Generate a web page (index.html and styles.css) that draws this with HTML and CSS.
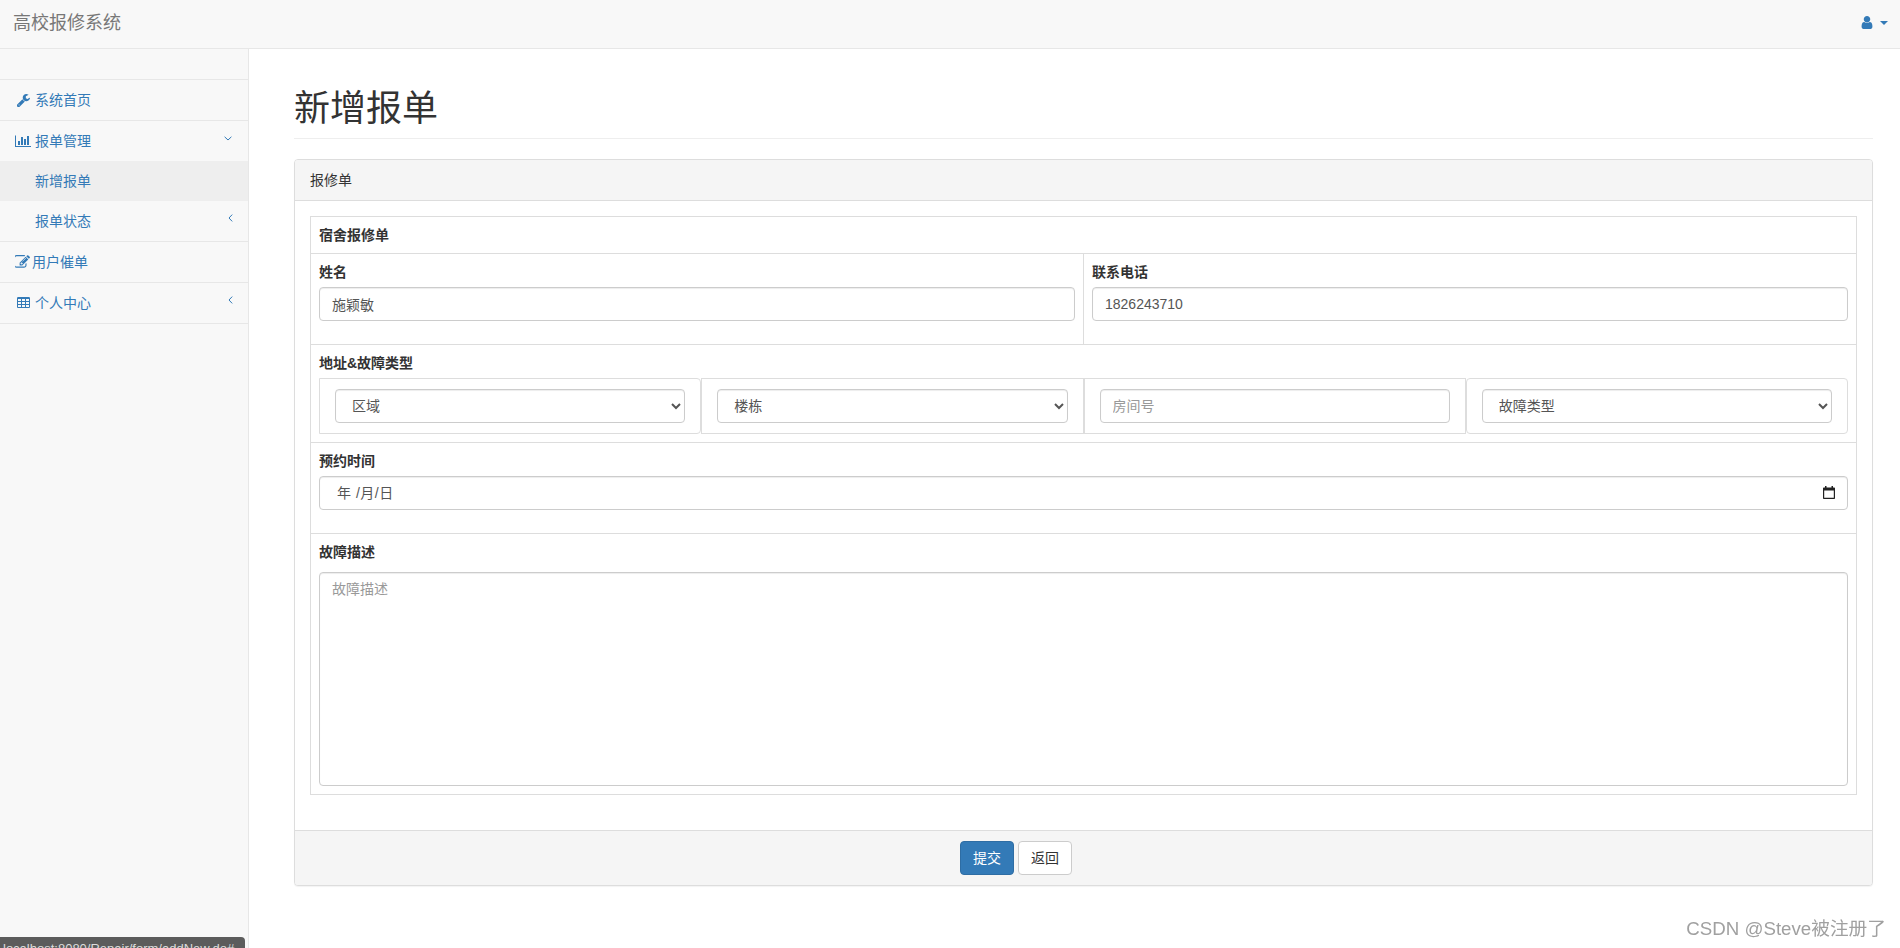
FILE: index.html
```html
<!DOCTYPE html>
<html lang="zh-CN">
<head>
<meta charset="utf-8">
<title>高校报修系统</title>
<link rel="stylesheet" href="styles.css">
</head>
<body>
<nav class="navbar">
  <a class="brand" href="#">高校报修系统</a>
  <a class="user-menu" href="#">
    <svg class="icon-user" viewBox="256 128 1280 1536"><path d="M1536 1399q0 109-62.5 187t-150.5 78h-854q-88 0-150.5-78t-62.5-187q0-85 8.5-160.5t31.5-152 58.5-131 94-89 134.5-34.5q131 128 313 128t313-128q76 0 134.5 34.5t94 89 58.5 131 31.5 152 8.5 160.5zm-256-887q0 159-112.5 271.5t-271.5 112.5-271.5-112.5-112.5-271.5 112.5-271.5 271.5-112.5 271.5 112.5 112.5 271.5z"/></svg>
    <span class="caret"></span>
  </a>
</nav>
<div class="wrapper">
  <aside class="sidebar">
    <div class="side-top"></div>
    <ul class="side-nav">
      <li class="side-item">
        <a class="side-link" href="#">
          <span class="side-icon"><svg width="13" height="13" viewBox="128 128 1600 1600"><path d="M448 1472q0-26-19-45t-45-19-45 19-19 45 19 45 45 19 45-19 19-45zm644-420l-682 682q-37 37-90 37-52 0-91-37l-106-108q-38-36-38-90 0-53 38-91l681-681q39 98 114.5 173.5t173.5 114.5zm634-435q0 39-23 106-47 134-164.5 217.5t-258.5 83.5q-185 0-316.5-131.5t-131.5-316.5 131.5-316.5 316.5-131.5q58 0 121.5 16.5t107.5 46.5q16 11 16 28t-16 28l-293 169v224l193 107q5-3 79-48.5t135.5-81 70.5-35.5q15 0 23.5 10t8.5 25z"/></svg></span>系统首页
        </a>
      </li>
      <li class="side-item">
        <a class="side-link" href="#">
          <span class="side-icon"><svg width="16" height="14" viewBox="0 0 2048 1792"><path d="M640 896v512h-256v-512h256zm384-512v1024h-256v-1024h256zm1024 1152v128h-2048v-1472h128v1344h1920zm-640-896v768h-256v-768h256zm384-384v1152h-256v-1152h256z"/></svg></span>报单管理
          <svg class="arrow arrow-down" viewBox="0 0 8 5"><path d="M.6.8 4 4l3.4-3.2"/></svg>
        </a>
        <ul class="sub-nav">
          <li><a class="sub-link active" href="#">新增报单</a></li>
          <li>
            <a class="sub-link" href="#">报单状态
              <svg class="arrow arrow-left" viewBox="0 0 5 8"><path d="M4.2.6 1 4l3.2 3.4"/></svg>
            </a>
          </li>
        </ul>
      </li>
      <li class="side-item">
        <a class="side-link" href="#">
          <span class="side-icon side-icon-plain"><svg width="15" height="14" viewBox="128 128 1664 1536"><path d="M888 1184l116-116-152-152-116 116v56h96v96h56zm440-720q-16-16-33 1l-350 350q-17 17-1 33t33-1l350-350q17-17 1-33zm80 594v190q0 119-84.5 203.5t-203.5 84.5h-832q-119 0-203.5-84.5t-84.5-203.5v-832q0-119 84.5-203.5t203.5-84.5h832q63 0 117 25 15 7 18 23 3 17-9 29l-49 49q-14 14-32 8-23-6-45-6h-832q-66 0-113 47t-47 113v832q0 66 47 113t113 47h832q66 0 113-47t47-113v-126q0-13 9-22l64-64q15-15 35-7t20 29zm-96-738l288 288-672 672h-288v-288zm444 132l-92 92-288-288 92-92q28-28 68-28t68 28l152 152q28 28 28 68t-28 68z"/></svg></span>用户催单
        </a>
      </li>
      <li class="side-item">
        <a class="side-link" href="#">
          <span class="side-icon"><svg width="13" height="12" viewBox="64 192 1664 1408"><path d="M576 1376v-192q0-14-9-23t-23-9h-320q-14 0-23 9t-9 23v192q0 14 9 23t23 9h320q14 0 23-9t9-23zm0-384v-192q0-14-9-23t-23-9h-320q-14 0-23 9t-9 23v192q0 14 9 23t23 9h320q14 0 23-9t9-23zm512 384v-192q0-14-9-23t-23-9h-320q-14 0-23 9t-9 23v192q0 14 9 23t23 9h320q14 0 23-9t9-23zm-512-768v-192q0-14-9-23t-23-9h-320q-14 0-23 9t-9 23v192q0 14 9 23t23 9h320q14 0 23-9t9-23zm512 384v-192q0-14-9-23t-23-9h-320q-14 0-23 9t-9 23v192q0 14 9 23t23 9h320q14 0 23-9t9-23zm512 384v-192q0-14-9-23t-23-9h-320q-14 0-23 9t-9 23v192q0 14 9 23t23 9h320q14 0 23-9t9-23zm-512-768v-192q0-14-9-23t-23-9h-320q-14 0-23 9t-9 23v192q0 14 9 23t23 9h320q14 0 23-9t9-23zm512 384v-192q0-14-9-23t-23-9h-320q-14 0-23 9t-9 23v192q0 14 9 23t23 9h320q14 0 23-9t9-23zm0-384v-192q0-14-9-23t-23-9h-320q-14 0-23 9t-9 23v192q0 14 9 23t23 9h320q14 0 23-9t9-23zm128-320v1088q0 66-47 113t-113 47h-1344q-66 0-113-47t-47-113v-1088q0-66 47-113t113-47h1344q66 0 113 47t47 113z"/></svg></span>个人中心
          <svg class="arrow arrow-left" viewBox="0 0 5 8"><path d="M4.2.6 1 4l3.2 3.4"/></svg>
        </a>
      </li>
    </ul>
  </aside>
  <main class="main">
    <h1 class="page-header">新增报单</h1>
    <section class="panel">
      <div class="panel-heading">报修单</div>
      <div class="panel-body">
        <div class="form-table">
          <div class="row row-title">宿舍报修单</div>
          <div class="row row-split">
            <div class="cell">
              <label class="field-label">姓名</label>
              <input class="control" type="text" value="施颖敏">
            </div>
            <div class="cell cell-right">
              <label class="field-label">联系电话</label>
              <input class="control" type="text" value="1826243710">
            </div>
          </div>
          <div class="row row-address">
            <label class="field-label">地址&amp;故障类型</label>
            <div class="address-grid">
              <div class="address-cell address-first">
                <select class="control"><option>区域</option></select>
              </div>
              <div class="address-cell">
                <select class="control"><option>楼栋</option></select>
              </div>
              <div class="address-cell">
                <input class="control" type="text" placeholder="房间号">
              </div>
              <div class="address-cell address-last">
                <select class="control"><option>故障类型</option></select>
              </div>
            </div>
          </div>
          <div class="row row-date">
            <label class="field-label">预约时间</label>
            <div class="control date-control">
              <span class="date-text">年 /月/日</span>
              <svg class="calendar" viewBox="0 0 12 13"><path d="M2 0h1.500v1.500h5V0H10v1.500h1.200q.8 0 .8.8v9.900q0 .8-.8.8H.8q-.8 0-.8-.8V2.300q0-.8.8-.8H2zM1.200 4.500v7.300h9.600V4.500z"/></svg>
            </div>
          </div>
          <div class="row row-desc">
            <label class="field-label">故障描述</label>
            <textarea class="control textarea" placeholder="故障描述"></textarea>
          </div>
        </div>
      </div>
      <div class="panel-footer">
        <button class="btn btn-primary" type="button">提交</button>
        <button class="btn btn-default" type="button">返回</button>
      </div>
    </section>
  </main>
</div>
<div class="status-bar">localhost:8080/Repair/form/addNew.do#</div>
<div class="watermark">CSDN @Steve被注册了</div>
</body>
</html>
```
FILE: styles.css
```css
* { box-sizing: border-box; }
html, body { height: 100%; }
body {
  margin: 0;
  height: 948px;
  overflow: hidden;
  background: #fff;
  color: #333;
  font: 14px/20px "Liberation Sans", "Noto Sans CJK SC", sans-serif;
  display: flex;
  flex-direction: column;
}
a { color: #337ab7; text-decoration: none; }
ul { list-style: none; margin: 0; padding: 0; }

.navbar {
  flex: none;
  height: 49px;
  background: #f8f8f8;
  border-bottom: 1px solid #e7e7e7;
  display: flex;
  align-items: center;
  justify-content: space-between;
  padding: 0 12px 3px 13px;
}
.brand { color: #777; font-size: 18px; }
.user-menu { display: flex; align-items: center; gap: 7px; }
.icon-user { width: 12px; height: 13px; fill: #337ab7; }
.caret {
  width: 0;
  height: 0;
  border-top: 4px solid #337ab7;
  border-left: 4px solid transparent;
  border-right: 4px solid transparent;
}

.wrapper { flex: 1; display: flex; min-height: 0; }
.sidebar {
  flex: none;
  width: 249px;
  background: #f8f8f8;
  border-right: 1px solid #e7e7e7;
}
.side-top { height: 31px; border-bottom: 1px solid #e7e7e7; }
.side-item { border-bottom: 1px solid #e7e7e7; }
.side-link, .sub-link {
  display: flex;
  align-items: center;
  height: 40px;
  padding-right: 15px;
}
.side-link { padding-left: 14px; }
.sub-link { padding-left: 35px; }
.sub-link.active { background: #eee; }
.side-icon {
  flex: none;
  width: 21px;
  display: flex;
  padding-right: 3px;
  justify-content: center;
  fill: #337ab7;
}
.side-icon-plain { width: 18px; padding-right: 0; justify-content: flex-start; padding-left: 1px; }
.arrow {
  margin-left: auto;
  margin-bottom: 6px;
  fill: none;
  stroke: #337ab7;
  stroke-width: 1;
}
.arrow-down { width: 8px; height: 5px; margin-right: 1px; }
.arrow-left { width: 5px; height: 8px; }

.main { flex: 1; min-width: 0; padding: 0 27px 0 45px; }
.page-header {
  margin: 40px 0 20px;
  padding-bottom: 9px;
  border-bottom: 1px solid #eee;
  font-size: 36px;
  font-weight: 400;
  line-height: 39.600px;
}
.panel {
  background: #fff;
  border: 1px solid #ddd;
  border-radius: 4px;
  box-shadow: 0 1px 1px rgba(0, 0, 0, .05);
}
.panel-heading {
  padding: 10px 15px;
  background: #f5f5f5;
  border-bottom: 1px solid #ddd;
  border-radius: 3px 3px 0 0;
}
.panel-body { padding: 15px; }
.form-table { border: 1px solid #ddd; border-bottom: 0; margin-bottom: 20px; }
.row { padding: 8px; border-bottom: 1px solid #ddd; }
.row-title { font-weight: 700; }
.row-split { padding: 0; display: grid; grid-template-columns: 772px 1fr; }
.cell { padding: 8px 8px 23px; }
.cell-right { border-left: 1px solid #ddd; }
.field-label { display: block; margin-bottom: 5px; font-weight: 700; }
.control {
  display: block;
  width: 100%;
  height: 34px;
  padding: 6px 12px;
  font: inherit;
  color: #555;
  background: #fff;
  border: 1px solid #ccc;
  border-radius: 4px;
  box-shadow: inset 0 1px 1px rgba(0, 0, 0, .075);
}
.control::placeholder { color: #999; opacity: 1; }
.address-grid { display: flex; }
.address-cell {
  flex: 1 1 0;
  min-width: 0;
  padding: 10px 15px;
  border: 1px solid #ddd;
}
.address-first { border-radius: 0 4px 4px 0; }
.address-last { border-radius: 4px; }
.row-date { padding-bottom: 23px; }
.date-control { display: flex; align-items: center; justify-content: space-between; padding: 6px 12px 6px 17px; }
.date-text { color: #555; letter-spacing: .5px; }
.calendar { width: 12px; height: 13px; fill: #222; }
.row-desc .field-label { margin-bottom: 10px; }
.textarea { height: 214px; resize: none; }
.panel-footer {
  padding: 10px 15px 10px 665px;
  background: #f5f5f5;
  border-top: 1px solid #ddd;
  border-radius: 0 0 3px 3px;
  display: flex;
  gap: 4px;
}
.btn {
  height: 34px;
  padding: 6px 12px;
  font: inherit;
  border: 1px solid transparent;
  border-radius: 4px;
}
.btn-primary { color: #fff; background: #337ab7; border-color: #2e6da4; }
.btn-default { color: #333; background: #fff; border-color: #ccc; }

.status-bar {
  position: fixed;
  left: 0;
  bottom: 0;
  width: 245px;
  height: 11px;
  overflow: hidden;
  padding: 4px 0 0 3px;
  background: #5c5c5c;
  border-radius: 0 4px 0 0;
  color: #ddd;
  font-size: 13px;
  line-height: 16px;
  white-space: nowrap;
}
.watermark {
  position: fixed;
  right: 14px;
  bottom: 7px;
  color: #a0a0a0;
  font-size: 18.700px;
  line-height: 24px;
  white-space: nowrap;
}
```
